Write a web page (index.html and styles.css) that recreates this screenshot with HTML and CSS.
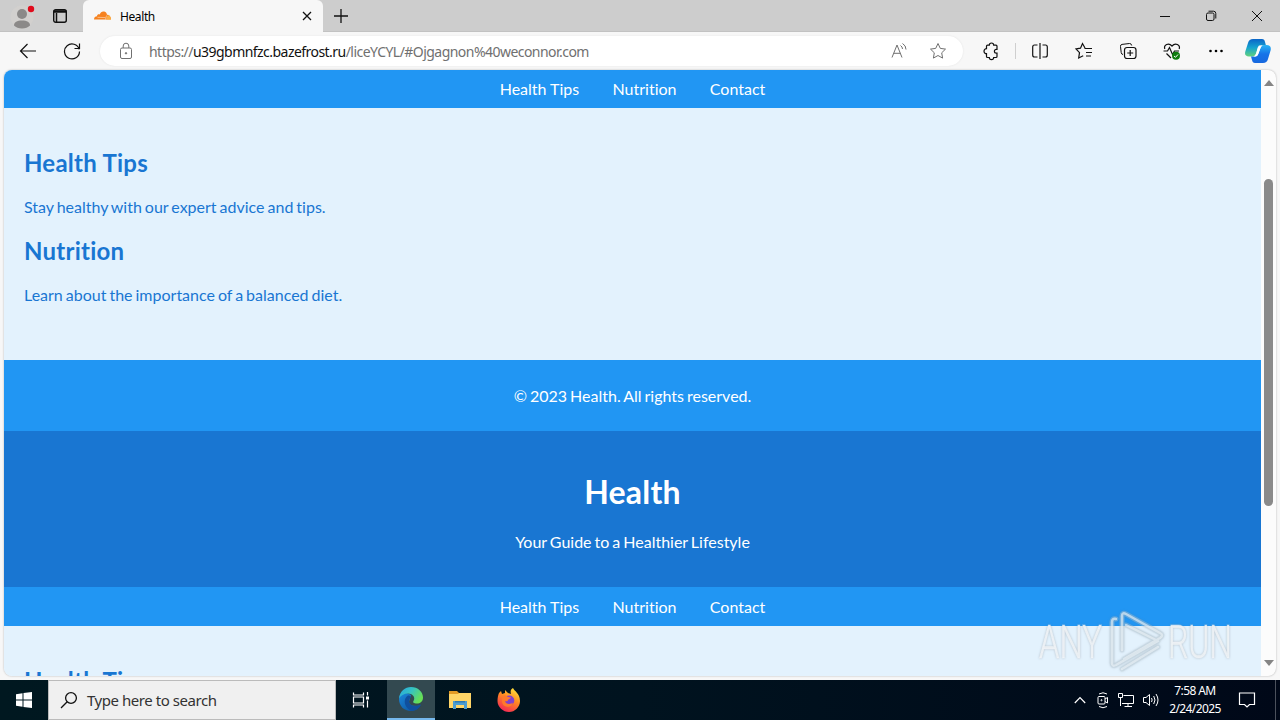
FILE: index.html
```html
<!DOCTYPE html>
<html lang="en">
<head>
    <meta charset="UTF-8">
    <meta name="viewport" content="width=device-width, initial-scale=1.0">
    <title>Health</title>
    <link rel="stylesheet" href="styles.css">
</head>
<body>
    <div class="tab-bar">
        <div class="tab-tools">
            <svg class="profile" width="26" height="28" viewBox="0 0 26 28">
                <circle cx="13" cy="15" r="11.5" fill="#d2d0ce"/>
                <circle cx="13" cy="12" r="5" fill="#8b8988"/>
                <path d="M5 23.500C5 20 8 18.500 13 18.500s8 1.500 8 5c-2 2-4.500 3-8 3s-6-1-8-3z" fill="#8b8988"/>
                <circle cx="22" cy="7" r="3.200" fill="#e00b1c"/>
            </svg>
            <svg class="icon" width="16" height="16" viewBox="0 0 16 16">
                <rect x="1.700" y="1.700" width="12.600" height="12.600" rx="2" stroke-width="1.400"/>
                <path d="M1.700 3.500h12.600" stroke-width="2.500"/>
                <path d="M4.500 5v9" stroke-width="1.500"/>
            </svg>
        </div>
        <div class="tab">
            <svg width="17" height="10" viewBox="0 0 17 10">
                <path d="M0 8.500C0 6.500 1.500 5.300 3 5.300 3 3.500 4.800 3 5.700 3.600 6.500 1 8.500 0 10.300.600c1.800.500 2.500 2 2.700 3.200 2.500-.200 4 2 4 4.700z" fill="#f6821f"/>
                <path d="M12.300 8.500c.600-2 .800-3.500 2-4.500 1.700.500 2.700 2.500 2.700 4.500z" fill="#fbad41"/>
                <path d="M3.500 6.300l8 .300M11.500 8.500l1-4" stroke="#fde3c7" stroke-width=".600"/>
            </svg>
            <span class="tab-title">Health</span>
            <svg class="icon" width="10" height="10" viewBox="0 0 10 10"><path d="M1 1l8 8M9 1L1 9" stroke-width="1.300"/></svg>
        </div>
        <svg class="icon new-tab" width="14" height="14" viewBox="0 0 14 14"><path d="M7 0v14M0 7h14" stroke-width="1.300"/></svg>
        <div class="window-buttons">
            <svg class="icon" width="12" height="12" viewBox="0 0 12 12"><path d="M1 6.500h10"/></svg>
            <svg class="icon" width="12" height="12" viewBox="0 0 12 12"><rect x="1.500" y="3" width="7.500" height="7.500" rx="1.500"/><path d="M3.500 1.200H8.500Q10.800 1.200 10.800 3.500V8.500"/></svg>
            <svg class="icon" width="12" height="12" viewBox="0 0 12 12"><path d="M1 1l10 10M11 1L1 11"/></svg>
        </div>
    </div>

    <div class="toolbar">
        <div class="nav-buttons">
            <svg class="icon" width="18" height="18" viewBox="0 0 18 18"><path d="M17 9H1.500M8.500 2L1.500 9l7 7" stroke-width="1.200"/></svg>
            <svg class="icon" width="18" height="18" viewBox="0 0 18 18"><path d="M16.200 7.300A7.500 7.500 0 1 0 16.500 9.500M16.500 1.500v5h-5" stroke-width="1.200"/></svg>
        </div>
        <div class="address">
            <svg class="icon gray" width="14" height="18" viewBox="0 0 14 18"><rect x="1.500" y="6" width="11" height="10.500" rx="1.500"/><path d="M4.200 6V4a2.800 2.800 0 0 1 5.600 0v2"/><circle cx="7" cy="11.300" r=".700" fill="#666"/></svg>
            <span class="url">https://<b>u39gbmnfzc.bazefrost.ru</b>/liceYCYL/#Ojgagnon%40weconnor.com</span>
            <svg class="icon gray read" width="18" height="18" viewBox="0 0 18 18"><path d="M2 15.500L7 3l5 12.500M3.700 11.300h6.700M10.500 3.500q2 1.300 2 3.500M12.500 1.500q3.500 2 3.500 6"/></svg>
            <svg class="icon gray" width="18" height="18" viewBox="0 0 18 18"><path d="M9 1.500l2.300 4.900 5.200.700-3.800 3.700.900 5.300L9 13.500l-4.600 2.600.900-5.300L1.500 7.100l5.200-.700z"/></svg>
        </div>
        <div class="tools">
            <svg class="icon" width="20" height="20" viewBox="0 0 20 20"><path d="M6.500 4.200H8.300a2.200 2.200 0 0 1 4.400 0H15q1 0 1 1V8.300h-.700a1.900 1.900 0 0 0 0 3.800H16V15.500q0 1-1 1h-2.300a2.200 2.200 0 0 1-4.400 0H6.500q-1 0-1-1V12.700a2.500 2.500 0 0 1 0-5V5.200q0-1 1-1z" stroke-width="1.200"/></svg>
            <span class="separator"></span>
            <svg class="icon" width="20" height="20" viewBox="0 0 20 20"><path d="M7.500 4H4.500Q2.700 4 2.700 6v8q0 2 1.800 2h3M12.500 4h3q1.800 0 1.800 2v8q0 2-1.800 2h-3M10 2v16" stroke-width="1.200"/></svg>
            <svg class="icon" width="20" height="20" viewBox="0 0 20 20"><path d="M11 7L8.500 2.500 6.500 7.200 2 8l3.500 3.700L4.700 17l4.500-2.300M10.500 7.500H18M12 11.500h6M12 15h5" stroke-width="1.200"/></svg>
            <svg class="icon" width="20" height="20" viewBox="0 0 20 20"><path d="M5 13.500Q3.500 13.500 3.200 11.500L2.500 5.500Q2.300 3.600 4 3.400l7.500-.900Q13.300 2.300 13.700 4.500"/><rect x="6.500" y="6.500" width="11.500" height="11" rx="2.500" stroke-width="1.200"/><path d="M12.200 9v6M9.200 12h6" stroke-width="1.200"/></svg>
            <svg class="icon" width="20" height="20" viewBox="0 0 20 20"><path d="M2.800 8C1.500 4 6.500 1 10 5c3.500-4 8.500-1 7.200 3M1.500 10h4l2-3.500 3 7L12.500 10H17M4.500 12.500L9 17" stroke-width="1.200"/><circle cx="14" cy="14.800" r="4" fill="#107c10" stroke="none"/><path d="M12 15l1.500 1.300L16 13.500" stroke="#fff"/></svg>
            <svg width="20" height="20" viewBox="0 0 20 20"><circle cx="4.500" cy="10" r="1.300"/><circle cx="10" cy="10" r="1.300"/><circle cx="15.500" cy="10" r="1.300"/></svg>
        </div>
        <svg class="copilot" width="26" height="24" viewBox="0 0 26 24">
            <defs>
                <linearGradient id="pilotA" x1="0" y1="0" x2="0" y2="1"><stop offset="0" stop-color="#0b65c8"/><stop offset=".5" stop-color="#16a4cf"/><stop offset="1" stop-color="#63d27c"/></linearGradient>
                <linearGradient id="pilotB" x1="0" y1="0" x2="0" y2="1"><stop offset="0" stop-color="#27b5f5"/><stop offset=".5" stop-color="#1673e8"/><stop offset="1" stop-color="#1768df"/></linearGradient>
            </defs>
            <path d="M8 0h9q2.500 0 3 3l1 3.500h-5q-2 0-3 3l-2 5q-1 3-4 3H4q-5 0-3.700-5L3 4q1-4 5-4z" fill="url(#pilotA)"/>
            <path d="M18 24h-8q-2.500 0-3-3l-1-3.500h4q2.500 0 3.500-3l2-5.500q1-3 4-3h2q5 0 4.200 5L23 20q-1 4-5 4z" fill="url(#pilotB)"/>
            <path d="M14 6.500h3.500q-1.500.500-2.200 3L13 15.500q-.700 2-2.500 2H8.500q1.700-.500 2.500-2.500l1.500-6q.500-1.500 1.500-2.500z" fill="#fff"/>
        </svg>
    </div>

    <div class="viewport">
        <div class="page">
            <nav class="first-nav">
                <a>Health Tips</a>
                <a>Nutrition</a>
                <a>Contact</a>
            </nav>
            <section>
                <h2>Health Tips</h2>
                <p>Stay healthy with our expert advice and tips.</p>
                <h2>Nutrition</h2>
                <p>Learn about the importance of a balanced diet.</p>
            </section>
            <footer>
                <p>© 2023 Health. All rights reserved.</p>
            </footer>
            <header>
                <h1>Health</h1>
                <p>Your Guide to a Healthier Lifestyle</p>
            </header>
            <nav>
                <a>Health Tips</a>
                <a>Nutrition</a>
                <a>Contact</a>
            </nav>
            <section>
                <h2>Health Tips</h2>
            </section>
        </div>
        <div class="scrollbar">
            <svg width="10" height="6" viewBox="0 0 10 6"><path d="M0 6L5 0l5 6z" fill="#858585"/></svg>
            <div class="thumb"></div>
            <svg width="10" height="6" viewBox="0 0 10 6"><path d="M0 0l5 6 5-6z" fill="#858585"/></svg>
        </div>
    </div>

    <div class="taskbar">
        <div class="start">
            <svg width="16" height="16" viewBox="0 0 16 16" fill="#fff"><path d="M0 2.200L6.500 1.300v6.200H0zM7.500 1.100L16 0v7.500H7.500zM0 8.500h6.500v6.200L0 13.800zM7.500 8.500H16V16l-8.500-1.100z"/></svg>
        </div>
        <div class="search">
            <svg class="icon" width="18" height="18" viewBox="0 0 18 18"><circle cx="11" cy="7" r="5.400" stroke-width="1.300"/><path d="M7.200 10.800L1 17" stroke-width="1.300"/></svg>
            <span>Type here to search</span>
        </div>
        <div class="task task-view">
            <svg class="icon light" width="18" height="18" viewBox="0 0 18 18"><path d="M1.500 1.500v2.500h10V1.500M1.500 16.500V14h10v2.500M1.500 6h10v6H1.500zM15.500 1v3.500M15.500 9.500v7" stroke-width="1.200"/><path d="M14 5.500h3v3h-3z" fill="#fff" stroke="none"/></svg>
        </div>
        <div class="task active">
            <svg width="24" height="24" viewBox="0 0 24 24">
                <defs>
                    <linearGradient id="edgeTop" x1="0" y1="0" x2="1" y2=".5"><stop offset="0" stop-color="#27a6df"/><stop offset=".5" stop-color="#35c2c4"/><stop offset="1" stop-color="#67df55"/></linearGradient>
                    <linearGradient id="edgeBase" x1="0" y1="0" x2="1" y2="1"><stop offset="0" stop-color="#1b88dc"/><stop offset="1" stop-color="#0b4c94"/></linearGradient>
                </defs>
                <path d="M0 12C1 4 6 5 12 8l-2 7c1 4 6 5 12 2.500C19.500 22 16 24 12 24 5 24 0 19 0 12z" fill="url(#edgeBase)"/>
                <path d="M0 11.500C1 4 6 0 12 0c7 0 12 5 12 10.500 0 4-3 6-6 6-3.500 0-4.500-1.500-3.500-2.500C17 10 13 6.500 9 6.500c-4 0-7.500 2-9 5z" fill="url(#edgeTop)"/>
                <path d="M9 8.500c-6 4-3 13 3 15.200 4 .500 8-2 9.800-5.700C16 21 10 18.500 10 14c0-1.500.800-2.800 2-3.700C11.500 9 10.500 8.500 9 8.500z" fill="#104f9d"/>
            </svg>
        </div>
        <div class="task">
            <svg width="22" height="20" viewBox="0 0 22 20"><path d="M0 1h8l2 2h11v4H0z" fill="#e39b25"/><path d="M0 4h9l1-1h12v15H0z" fill="#ffd567"/><path d="M4 11h14v8h-3v-4H7v4H4z" fill="#4b9cd0"/><path d="M6 11h10v1.500H6z" fill="#2d78b3"/></svg>
        </div>
        <div class="task">
            <svg width="24" height="24" viewBox="0 0 24 24">
                <defs><linearGradient id="fox" x1=".8" y1="0" x2=".3" y2="1"><stop offset="0" stop-color="#ffe83d"/><stop offset=".45" stop-color="#ff8a22"/><stop offset="1" stop-color="#f32656"/></linearGradient></defs>
                <path d="M2 5l2-2 1 3 3-1V2l3 3 3 1c-1-3 0-5 2-6 1 3 7 5 7 13 0 6-5 11-11 11S.500 19 .500 13C.500 10 1 7 2 5z" fill="url(#fox)"/>
                <circle cx="12.300" cy="12.500" r="5" fill="#8142cc"/>
                <path d="M6 8c2-1 4 0 5 1l3 .500c-1 1.500-2.500 1.500-3 2.500 0 2-3 1-3 1 .500 3 5 4 8 1.500-1 4-4 5-7 4-4-1-5-6-3-10z" fill="#ff7a2b"/>
            </svg>
        </div>
        <div class="tray">
            <svg class="icon light chevron" width="12" height="8" viewBox="0 0 12 8"><path d="M.800 7L6 1.500 11.200 7" stroke-width="1.200"/></svg>
            <svg class="icon light" width="14" height="18" viewBox="0 0 14 18"><rect x="2" y="5.500" width="7" height="7.500" rx="1"/><path d="M9 8l2.500-1.500v5.500L9 10.500M3 3q4-2.500 8 0M3 15.500q4 2.500 8 0"/><circle cx="5.500" cy="9.200" r=".600"/></svg>
            <svg class="icon light" width="18" height="16" viewBox="0 0 18 16"><path d="M6.500 3.500h10v8H5M11 11.500V14M7.500 14.500H15M1.500 1.500h4v4h-4zM3.500 5.500v8.500"/></svg>
            <svg class="icon light" width="18" height="16" viewBox="0 0 18 16"><path d="M1.500 5.500H4l3.500-3v11l-3.500-3H1.500zM9.500 6q1.300 2 0 4M11.700 4q2.600 4 0 8M14 2q4 6 0 12"/></svg>
            <div class="clock">7:58 AM<br>2/24/2025</div>
            <svg class="icon light" width="18" height="18" viewBox="0 0 18 18"><path d="M1.500 2h15v11.500h-5L9 16l-2.500-2.500h-5z" stroke-width="1.200"/></svg>
            <span class="desktop-edge"></span>
        </div>
    </div>

    <svg class="watermark" width="200" height="66" viewBox="0 0 200 66">
        <text x="3" y="50" textLength="63" lengthAdjust="spacingAndGlyphs">ANY</text>
        <text x="132" y="50" textLength="64" lengthAdjust="spacingAndGlyphs">RUN</text>
        <path class="mark-edge" d="M80 11Q76 10 76 14V55Q76 59 80 57L122 33M86 42V8Q86 4 90 6L124 25Q128 27 124 30L88 51M90 17L122 33M86 61L122 39"/>
        <path class="mark" d="M80 11Q76 10 76 14V55Q76 59 80 57L122 33M86 42V8Q86 4 90 6L124 25Q128 27 124 30L88 51M90 17L122 33M86 61L122 39"/>
    </svg>
</body>
</html>
```

FILE: styles.css
```css
* {
    box-sizing: border-box;
}
body {
    margin: 0;
    width: 1280px;
    height: 720px;
    overflow: hidden;
    display: flex;
    flex-direction: column;
    background-color: #f7f7f7;
    font-family: "Noto Sans", sans-serif;
}
svg {
    display: block;
    flex-shrink: 0;
}
.icon {
    fill: none;
    stroke: #111;
}
.gray {
    stroke: #707070;
}
.light {
    stroke: #fff;
}

/* tabs */
.tab-bar {
    display: flex;
    align-items: center;
    height: 32px;
    background-color: #cdcdcd;
    border-bottom: 1px solid #c2c2c2;
}
.tab-tools {
    display: flex;
    align-items: center;
    gap: 17px;
    width: 83px;
    padding-left: 9px;
}
.tab {
    display: flex;
    align-items: center;
    width: 240px;
    height: 32px;
    padding: 0 11px;
    margin-bottom: -1px;
    background-color: #f7f7f7;
    border-radius: 6px 6px 0 0;
    font-size: 12px;
}
.tab-title {
    flex: 1;
    margin-left: 9px;
    letter-spacing: -0.4px;
}
.new-tab {
    margin-left: 11px;
}
.window-buttons {
    display: flex;
    gap: 34px;
    margin-left: auto;
    padding-right: 17px;
}

/* toolbar */
.toolbar {
    display: flex;
    align-items: center;
    height: 38px;
}
.nav-buttons {
    display: flex;
    gap: 26px;
    width: 100px;
    padding-left: 19px;
}
.address {
    display: flex;
    align-items: center;
    width: 863px;
    height: 30px;
    padding: 0 16px 0 19px;
    background-color: #fff;
    border-radius: 15px;
    box-shadow: 0 0 2px #e2e2e2;
}
.url {
    margin-left: 16px;
    color: #707070;
    font-size: 14px;
    letter-spacing: -0.54px;
    white-space: nowrap;
}
.url b {
    color: #111;
    font-weight: normal;
}
.read {
    margin-left: auto;
    margin-right: 21px;
}
.tools {
    display: flex;
    align-items: center;
    gap: 24px;
    margin-left: 18px;
}
.separator {
    width: 1px;
    height: 16px;
    margin: 0 -10px 0 -10px;
    background-color: #cfcfcf;
}
.copilot {
    margin-left: 19px;
}

/* web page */
.viewport {
    display: flex;
    height: 606px;
    margin: 0 4px;
    overflow: hidden;
    border-radius: 8px;
    background-color: #fcfcfc;
    box-shadow: 0 0 2px #aaa;
}
.page {
    width: 1257px;
    font-family: Lato, sans-serif;
    font-variant-ligatures: none;
    background-color: #e3f2fd;
    color: #1976d2;
}
.page nav {
    height: 39px;
    padding: 10px;
    background-color: #2196f3;
    color: #fff;
    text-align: center;
}
.page nav.first-nav {
    height: 38px;
    padding-top: 9px;
}
.page nav a {
    margin: 0 14.6px;
}
.page section {
    height: 252px;
    padding: 20px;
}
.page h2 {
    margin: 20px 0;
    font-size: 24px;
    line-height: 29px;
    letter-spacing: 0.25px;
}
.page p {
    margin: 16px 0;
    line-height: 19px;
    word-spacing: -1.1px;
}
.page section p {
    margin: 20px 0;
}
.page header,
.page footer {
    display: flow-root;
    color: #fff;
    text-align: center;
}
.page footer {
    padding: 10px;
    background-color: #2196f3;
}
.page header {
    padding: 20px;
    background-color: #1976d2;
}
.page h1 {
    margin: 21px 0;
    font-size: 32px;
    line-height: 39px;
    letter-spacing: 0.2px;
}
.scrollbar {
    display: flex;
    flex-direction: column;
    align-items: center;
    justify-content: space-between;
    width: 15px;
    padding: 10px 0;
}
.thumb {
    width: 9px;
    height: 327px;
    margin-bottom: 62px;
    background-color: #8a8a8a;
    border-radius: 5px;
}

/* taskbar */
.taskbar {
    display: flex;
    height: 40px;
    margin-top: 4px;
    background: linear-gradient(90deg, #001820, #00131f 50%, #000818);
}
.start,
.task {
    display: flex;
    align-items: center;
    justify-content: center;
    width: 48px;
}
.task {
    width: 49px;
}
.search {
    display: flex;
    align-items: center;
    gap: 9px;
    width: 288px;
    padding-left: 11px;
    background-color: #f0f0f0;
    border: 1px solid #bbb;
    color: #333;
    font-size: 15px;
    letter-spacing: -0.45px;
}
.task-view {
    width: 51px;
    padding-right: 2px;
}
.active {
    width: 48px;
    background-color: #334950;
    border-bottom: 2px solid #76b9ed;
}
.tray {
    display: flex;
    align-items: center;
    gap: 7px;
    margin-left: auto;
    color: #fff;
}
.chevron {
    margin-right: 3px;
}
.clock {
    width: 56px;
    margin-right: 8px;
    font-size: 12px;
    line-height: 18px;
    letter-spacing: -0.6px;
    text-align: center;
    white-space: nowrap;
}
.desktop-edge {
    width: 1px;
    height: 40px;
    margin: 0 4px 0 12px;
    background-color: #4b515c;
}

.watermark {
    position: absolute;
    left: 1036px;
    top: 608px;
    filter: drop-shadow(0 0 1px rgba(110, 120, 130, 0.5));
}
.watermark text {
    font: 300 46px Roboto, sans-serif;
    fill: rgba(245, 248, 250, 0.8);
    stroke: rgba(245, 248, 250, 0.4);
}
.mark,
.mark-edge {
    fill: none;
    stroke: rgba(240, 246, 252, 0.6);
    stroke-width: 2.5;
    stroke-linecap: round;
    stroke-linejoin: round;
}
.mark-edge {
    stroke: rgba(190, 208, 222, 0.35);
    stroke-width: 5;
}
```
